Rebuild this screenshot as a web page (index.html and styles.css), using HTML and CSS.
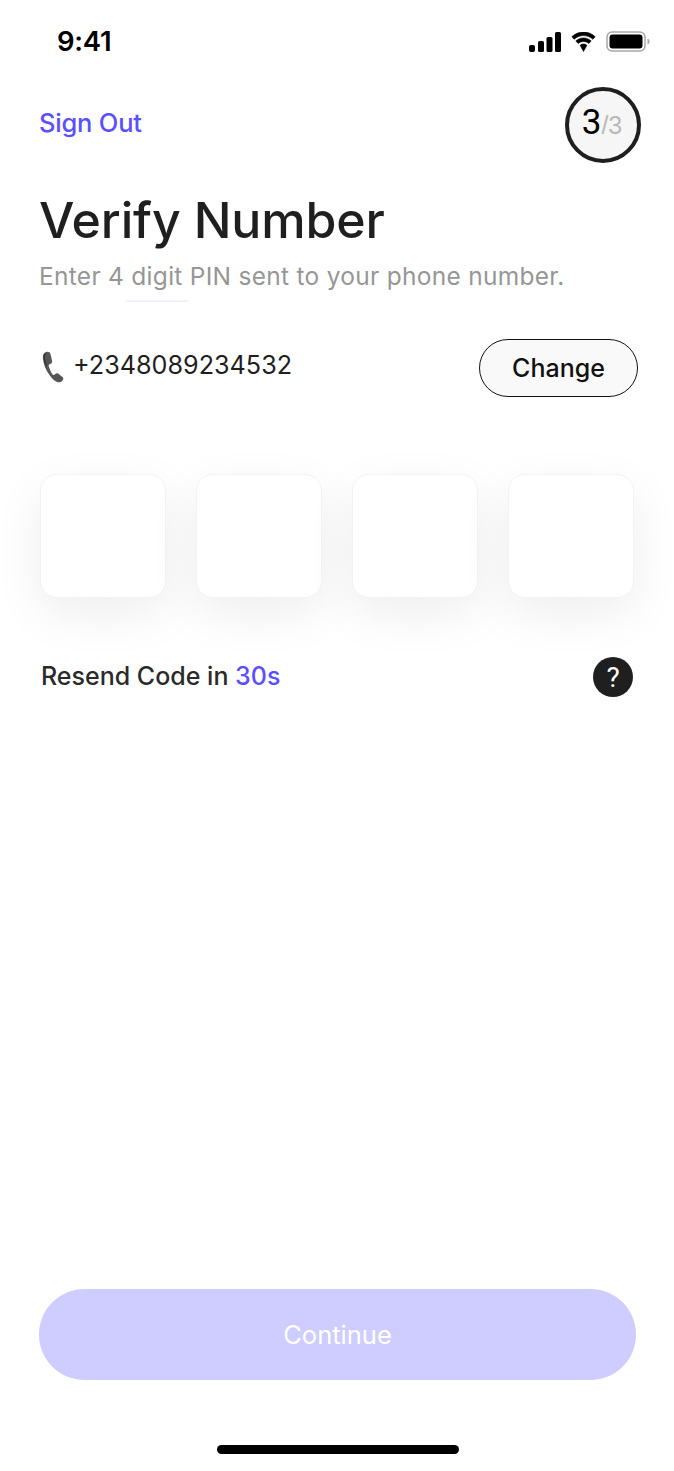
FILE: index.html
```html
<!doctype html>
<html>
<head>
    <meta charset="UTF-8">
    <title>Verify Number</title>
    <link rel="stylesheet" href="styles.css">
</head>
<body>
    <div class="page">
        <div class="status">
            <span class="time">9:41</span>
            <div class="status-icons">
                <svg width="32" height="20" viewBox="0 0 32 20"><rect x="0" y="13" width="6" height="7" rx="2"/><rect x="9" y="9" width="6" height="11" rx="1.5"/><rect x="17.5" y="5" width="6" height="15" rx="1.5"/><rect x="26" y="0" width="6" height="20" rx="1.5"/></svg>
                <svg width="27" height="20" viewBox="1.5 0 24 20" stroke="#000" stroke-width="0.6"><path d="M13.5 3.6c3.6 0 6.9 1.4 9.4 3.7l2.3-2.6C22.1 1.8 18 0 13.500 0S4.900 1.800 1.800 4.700l2.300 2.600c2.500-2.300 5.800-3.700 9.400-3.700z"/><path d="M13.500 9.500c2 0 3.900.8 5.300 2l2.400-2.600c-2.100-1.800-4.800-3-7.700-3s-5.600 1.200-7.700 3l2.400 2.600c1.400-1.200 3.300-2 5.300-2z"/><path d="M13.500 12c-1.300 0-2.500.5-3.400 1.300l3.400 6.200 3.400-6.200c-.9-.8-2.100-1.300-3.400-1.300z"/></svg>
                <svg width="45" height="21" viewBox="0 0 45 21"><rect x="1" y="1" width="38" height="19" rx="5" fill="none" stroke="#a8a8a8" stroke-width="1.500"/><rect x="3.500" y="3.500" width="33" height="14" rx="3"/><path d="M41.500 7.500c1.300.4 2 1.500 2 3s-.7 2.600-2 3z" fill="#a8a8a8"/></svg>
            </div>
        </div>

        <div class="top">
            <a class="sign-out">Sign Out</a>
            <div class="step"><b>3</b><span>/3</span></div>
        </div>

        <h1>Verify Number</h1>
        <p class="sub">Enter 4 digit PIN sent to your phone number.</p>
        <div class="tab-line"></div>

        <div class="phone-row">
            <div class="phone">
                <svg width="23" height="34" viewBox="0 0 26 36"><path d="M3.500 1.500C1.500 2.500.8 5 1 8c.5 6 3 13 7.500 19 2.500 3.500 5 6.500 8.500 8 2 .8 4.500.2 6-1.500 1.200-1.300 1.500-3 .5-4l-5-4c-1-.7-2.500-.5-3.500.3l-1.500 1.200c-.5.3-1 .2-1.400-.3-2-3-3.700-6.700-4.600-10.200-.1-.6.100-1 .6-1.300l1.800-.9c1.200-.6 1.800-2 1.500-3.300L9.500 3C9 1 6 .2 3.500 1.500z" fill="#555"/><path d="M4 3C2.500 3.800 2.300 6 2.500 8c.4 3 1.200 6 2.500 9" fill="none" stroke="#333" stroke-width="1.500"/></svg>
                <span>+2348089234532</span>
            </div>
            <button class="change">Change</button>
        </div>

        <div class="pins">
            <div class="pin"></div>
            <div class="pin"></div>
            <div class="pin"></div>
            <div class="pin"></div>
        </div>

        <div class="resend-row">
            <span class="resend">Resend Code in <em>30s</em></span>
            <span class="help">?</span>
        </div>

        <div class="bottom">
            <button class="continue">Continue</button>
            <div class="home"></div>
        </div>
    </div>
</body>
</html>
```

FILE: styles.css
```css
* { margin: 0; padding: 0; box-sizing: border-box; }
html, body { background: #fff; }
body { font-family: "Inter", "Noto Sans", sans-serif; color: #1f1f1f; }
.page { width: 674px; height: 1471px; display: flex; flex-direction: column; padding: 0 36px 0 39px; overflow: hidden; }

.status { height: 87px; display: flex; justify-content: space-between; align-items: flex-start; padding: 23px 0 0 18px; flex-shrink: 0; }
.time { font-weight: 600; font-size: 27.500px; line-height: 36px; color: #000; letter-spacing: -0.3px; }
.status-icons { display: flex; align-items: center; gap: 9px; margin-top: 8px; margin-right: -13px; }

.top { display: flex; justify-content: space-between; align-items: center; height: 76px; margin-right: -3px; }
.sign-out { color: #5b50ff; font-size: 25.5px; font-weight: 500; letter-spacing: -0.2px; margin-bottom: 6px; }
.step { width: 76px; height: 76px; border-radius: 50%; border: 4px solid #1f1f1f; background: #f6f6f6; display: flex; align-items: baseline; justify-content: center; line-height: 64px; padding-right: 2px; }
.step b { font-family: "Roboto", sans-serif; font-weight: 400; font-size: 35px; color: #000; }
.step span { font-family: "Liberation Sans", sans-serif; font-size: 25px; color: #b9b9b9; }

h1 { font-size: 50px; font-weight: 500; line-height: 60px; letter-spacing: -0.15px; margin-top: 27px; }
.sub { font-size: 24.5px; line-height: 32px; color: #969696; margin-top: 10px; letter-spacing: 0.28px; }
.tab-line { width: 62px; height: 2px; background: #f1f0ff; margin: 8px 0 0 87px; }

.phone-row { display: flex; justify-content: space-between; align-items: flex-start; margin-top: 37px; }
.phone { display: flex; align-items: flex-start; gap: 8px; font-size: 25.2px; line-height: 30px; padding: 11px 0 0 3px; }
.change { width: 159px; height: 58px; border-radius: 29px; border: 1.5px solid #111; background: #f9f9f9; font-family: inherit; font-size: 25px; font-weight: 500; color: #111; }

.pins { display: flex; gap: 30px; margin-top: 77px; margin-left: 1px; }
.pin { width: 126px; height: 124px; border-radius: 17px; background: #fff; border: 1px solid #f3f3f3; box-shadow: 0 16px 50px rgba(0, 0, 0, 0.07); }

.resend-row { display: flex; justify-content: space-between; align-items: center; margin-top: 59px; padding: 0 5px 0 2px; }
.resend { font-size: 25px; font-weight: 500; color: #2a2a2a; padding-bottom: 2px; }
.resend em { font-style: normal; color: #5b50ff; }
.help { width: 40px; height: 40px; border-radius: 50%; background: #1f1f1f; color: #fff; font-family: "Roboto", sans-serif; font-size: 28px; font-weight: 400; display: flex; align-items: center; justify-content: center; }

.bottom { margin-top: auto; display: flex; flex-direction: column; align-items: flex-start; padding-bottom: 17px; }
.continue { width: 597px; height: 91px; border: 0; border-radius: 46px; background: #cfccff; color: #fff; font-family: inherit; font-size: 25.5px; font-weight: 400; }
.home { width: 242px; height: 9px; background: #000; border-radius: 5px; margin-top: 65px; margin-left: 178px; }
```
